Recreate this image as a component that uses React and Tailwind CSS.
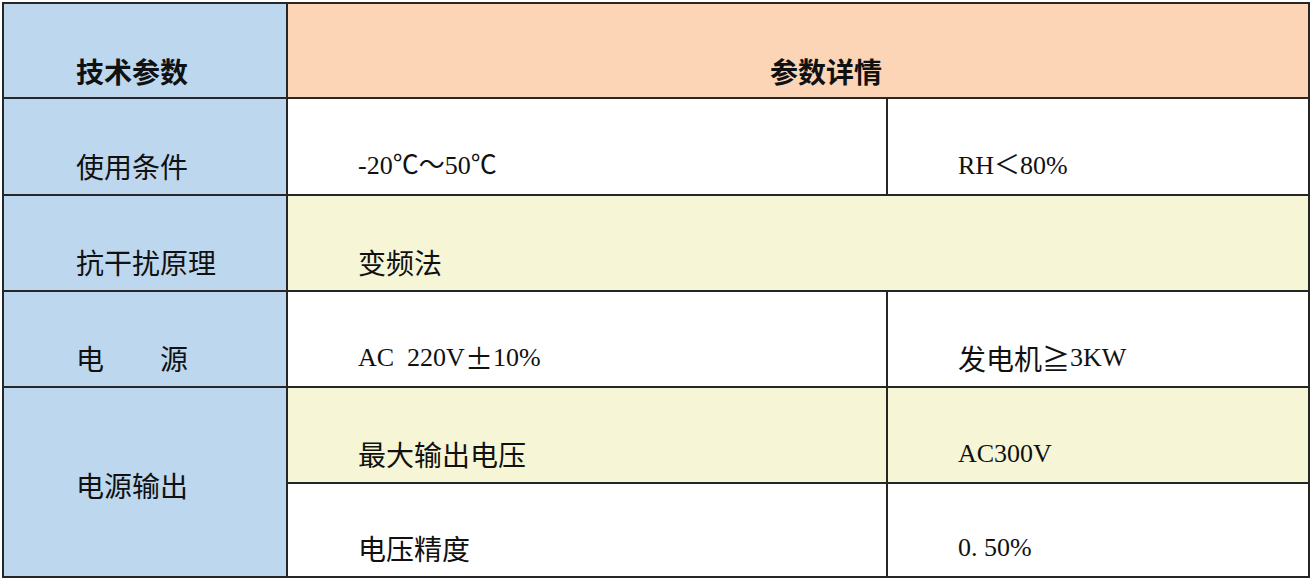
import React from "react";

// Spec table: 技术参数 / 参数详情
const FONT = { fontFamily: '"Liberation Serif", "Noto Sans CJK SC", serif' };
const CJK = "text-[28px] [font-family:'Noto_Sans_CJK_SC',sans-serif]";

const base = "flex leading-[32px] text-[26px] text-[#111]";
const bottom = `${base} items-end pb-[12px]`;
const label = `${bottom} bg-[#bdd7ee] pl-[72px]`;
const white = `${bottom} bg-white pl-[70px]`;
const yellow = `${bottom} bg-[#f6f6d6] pl-[70px]`;

function Zh({ children }) {
  return <span className={CJK}>{children}</span>;
}

export default function App() {
  return (
    <div className="w-[1312px] h-[580px] bg-white pt-[2px] pl-[2px]" style={FONT}>
      <div className="grid w-[1308px] grid-cols-[282px_598px_420px] grid-rows-[93px_95px_94px_94px_94px_92px] gap-[2px] p-[2px] bg-[#262626]">
        {/* Header */}
        <div className={`${base} items-end pb-[10px] bg-[#bdd7ee] pl-[72px] font-bold`}>
          <Zh>技术参数</Zh>
        </div>
        <div className={`${base} items-end pb-[10px] col-span-2 bg-[#fbd5b6] pl-[482px] font-bold`}>
          <Zh>参数详情</Zh>
        </div>

        {/* 使用条件 */}
        <div className={label}>
          <Zh>使用条件</Zh>
        </div>
        <div className={white}>-20℃～50℃</div>
        <div className={white}>RH＜80%</div>

        {/* 抗干扰原理 */}
        <div className={label}>
          <Zh>抗干扰原理</Zh>
        </div>
        <div className={`${yellow} col-span-2`}>
          <Zh>变频法</Zh>
        </div>

        {/* 电源 */}
        <div className={label}>
          <Zh>电　　源</Zh>
        </div>
        <div className={white}>
          AC&nbsp;&nbsp;220V<Zh>±</Zh>10%
        </div>
        <div className={white}>
          <Zh>发电机≧</Zh>3KW
        </div>

        {/* 电源输出 */}
        <div className={`${base} row-span-2 items-center pt-[6px] bg-[#bdd7ee] pl-[72px]`}>
          <Zh>电源输出</Zh>
        </div>
        <div className={yellow}>
          <Zh>最大输出电压</Zh>
        </div>
        <div className={yellow}>AC300V</div>
        <div className={white}>
          <Zh>电压精度</Zh>
        </div>
        <div className={white}>0.&nbsp;50%</div>
      </div>
    </div>
  );
}
